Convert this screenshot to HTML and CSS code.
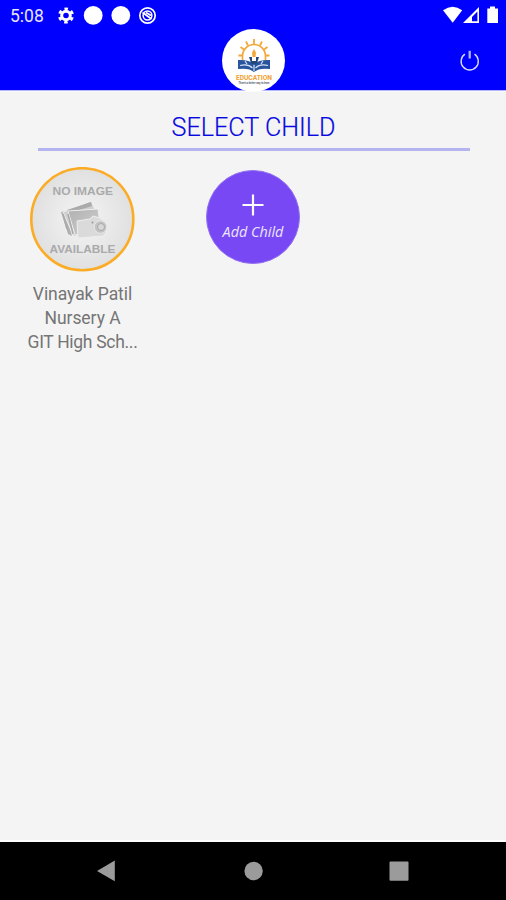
FILE: index.html
```
<!DOCTYPE html>
<html lang="en">
<head>
<meta charset="utf-8">
<title>Select Child</title>
<link rel="stylesheet" href="styles.css">
</head>
<body>
<div class="screen">
  <header class="header">
    <div class="status">
      <span class="clock">5:08</span>
      <svg class="status-left" viewBox="56 0 104 29" width="104" height="29">
        <g fill="none" stroke="#fff">
          <circle cx="66" cy="15.5" r="4.3" stroke-width="3"/>
          <circle cx="66" cy="15.5" r="6.7" stroke-width="2.6" stroke-dasharray="3.5 3.516" stroke-dashoffset="-1.75"/>
          <circle cx="147.5" cy="15.5" r="7.7" stroke-width="1.7"/>
          <circle cx="147.5" cy="15.5" r="4.4" stroke-width="1.5"/>
          <path d="M142.5 12.5L151.5 19M146 12.5L151 15.5" stroke-width="1.7"/>
        </g>
        <circle cx="93.2" cy="15.4" r="9.4" fill="#fff"/>
        <circle cx="120.8" cy="15.4" r="9.4" fill="#fff"/>
      </svg>
      <svg class="status-right" viewBox="440 0 66 29" width="66" height="29">
        <path fill="#fff" d="M443 10.2Q452.7 3.2 462.2 10.2L452.7 22.8Z"/>
        <path fill="#fff" fill-rule="evenodd" d="M479 7V23H463ZM477.4 11.500L472 17V21.300H477.400Z"/>
        <path fill="#fff" d="M490 6.6H495V8.4H498V23H487.3V8.4H490Z"/>
      </svg>
    </div>
    <div class="appbar">
      <div class="logo">
        <svg viewBox="222 29 63 63" width="63" height="63">
          <g fill="none" stroke="#f3a83b">
            <path d="M242.5 60.5V56A11.5 11.5 0 0 1 265.5 56V60.5" stroke-width="1.7"/>
            <path d="M254 39V44M246 41.5L248 45.5M262 41.5L260 45.5M240.5 47L244 49.500M267.5 47L264 49.500M238.5 55.5H242M266 55.5H269.5" stroke-width="1.8"/>
          </g>
          <path fill="#f3a83b" d="M254 49L256 52.5L255.5 57H252.5L252 52.5Z"/>
          <path fill="#28559d" d="M238 60Q249 59.5 254 64Q259 59.5 270 60V69Q259 67.500 254 72Q249 67.500 238 69Z"/>
          <path fill="none" stroke="#d7e3f5" stroke-width="1.2" d="M254 64V71M240 65.5Q248 63.5 252.5 68M268 65.5Q260 63.5 255.5 68M245 61L247 64M263 61L261 64"/>
          <path fill="#244579" d="M249 57H252V61H256V57H259L257 63L254 65L251 63Z"/>
          <text class="logo-name" x="236" y="80.2" textLength="36" lengthAdjust="spacingAndGlyphs">EDUCATION</text>
          <text class="logo-tag" x="238.5" y="83.8" textLength="31" lengthAdjust="spacingAndGlyphs">There's a better way to learn</text>
        </svg>
      </div>
      <svg class="power" viewBox="456 48 28 28" width="28" height="28">
        <path d="M464.9 54.2A8.6 8.6 0 1 0 474.5 54.2" fill="none" stroke="#d8d8ff" stroke-width="1.4"/>
        <path d="M469.7 50.8V58.5" stroke="#b4b4ff" stroke-width="2.3"/>
      </svg>
    </div>
  </header>
  <main class="content">
    <h1 class="title"><svg width="166" height="34"><text x="0.5" y="26" textLength="164" lengthAdjust="spacingAndGlyphs">SELECT CHILD</text></svg></h1>
    <div class="children">
      <div class="child">
        <svg class="avatar" viewBox="30 167 105 105" width="105" height="105">
          <defs>
            <radialGradient id="shade"><stop offset="0" stop-color="#f5f5f5"/><stop offset="1" stop-color="#e0e0e0"/></radialGradient>
            <linearGradient id="photo" x1="0" y1="0" x2="1" y2="1"><stop offset="0" stop-color="#b0b0b0"/><stop offset="1" stop-color="#d2d2d2"/></linearGradient>
          </defs>
          <circle cx="82.3" cy="219.2" r="51" fill="url(#shade)" stroke="#fbac24" stroke-width="2.6"/>
          <text x="52.5" y="194.8" textLength="60.5" lengthAdjust="spacingAndGlyphs">NO IMAGE</text>
          <path d="M61 212L68 234L72 236L65 211Z" fill="#b0b0b0"/>
          <path d="M63 212L91 201L101 222L74 237Z" fill="#d0d0d0" stroke="#f0f0f0"/>
          <path d="M67 210L91 202L92 206L70 213Z" fill="#ababab"/>
          <path d="M68 211L98 209L101 231L75 235Z" fill="url(#photo)" stroke="#eee"/>
          <path d="M63 214L67 229M68 214L73 234" stroke="#aaa" stroke-width="1.5"/>
          <path d="M77 221L90 219L93 216L100 218L106 222V233L103 236L78 238Z" fill="#dadada" stroke="#eee"/>
          <circle cx="100.5" cy="227" r="6.3" fill="#c3c3c3" stroke="#e8e8e8"/>
          <circle cx="101" cy="227" r="3.5" fill="#d8d8d8" stroke="#a9a9a9"/>
          <circle cx="92.5" cy="222.5" r="1" fill="#999"/>
          <text x="49.5" y="252.5" textLength="66" lengthAdjust="spacingAndGlyphs">AVAILABLE</text>
        </svg>
        <div class="details">
          <div>Vinayak Patil</div>
          <div>Nursery A</div>
          <div class="school">GIT High Sch...</div>
        </div>
      </div>
      <div class="add">
        <svg width="22" height="22" viewBox="0 0 22 22"><path d="M11 .5V21.5M.5 11H21.5" stroke="#fff" stroke-width="2.2"/></svg>
        <span>Add Child</span>
      </div>
    </div>
  </main>
  <nav class="nav">
    <svg viewBox="0 842 506 58" width="506" height="58" fill="#9b9b9b">
      <path d="M114.8 860.5V881.3L97 871Z"/>
      <circle cx="253.6" cy="871" r="9.2"/>
      <rect x="389.5" y="861.5" width="19" height="19.3" rx="1"/>
    </svg>
  </nav>
</div>
</body>
</html>
```
FILE: styles.css
```
* { box-sizing: border-box; }
body {
  margin: 0;
  background: #f4f4f4;
  font-family: Roboto, sans-serif;
}
svg { display: block; }
.screen {
  display: flex;
  flex-direction: column;
  width: 506px;
  height: 900px;
}
.header {
  height: 91px;
  background: #0000ff;
  border-bottom: 1px solid #b4b4ff;
}
.status {
  display: flex;
  height: 29px;
}
.clock {
  width: 46px;
  margin-right: 10px;
  padding-left: 10px;
  color: #e6e6ff;
  font-size: 17.5px;
  line-height: 32px;
  white-space: nowrap;
}
.status-right { margin-left: auto; }
.appbar {
  display: grid;
  grid-template-columns: 222px 63px 1fr;
  height: 62px;
}
.logo {
  grid-column: 2;
  width: 63px;
  height: 63px;
  border-radius: 50%;
  background: #fff;
}
.logo-name {
  fill: #f0a030;
  font-size: 7.5px;
  font-weight: 700;
}
.logo-tag {
  fill: #555b70;
  font-size: 3px;
  font-weight: 700;
}
.power {
  justify-self: end;
  margin: 19px 22px 0 0;
}
.content {
  flex: 1;
  border-top: 1px solid #fafafa;
  border-bottom: 2px solid #fff;
}
.title {
  display: flex;
  justify-content: center;
  width: 432px;
  height: 59px;
  margin: 0 0 0 38px;
  padding-top: 18px;
  border-bottom: 3px solid #b4b4f0;
}
.title text {
  fill: #0808e0;
  font-size: 25px;
  font-weight: 300;
  stroke: #0808e0;
  stroke-width: 0.2px;
}
.children {
  display: grid;
  grid-template-columns: 168px 168px 1fr;
  padding-top: 16px;
}
.child {
  display: flex;
  flex-direction: column;
  align-items: center;
  padding-right: 3px;
}
.avatar text {
  fill: #aaa;
  font-family: "Liberation Sans", sans-serif;
  font-size: 11.5px;
  font-weight: 700;
}
.details {
  margin-top: 10px;
  color: #757575;
  font-size: 17.5px;
  letter-spacing: -0.05px;
  line-height: 24px;
  text-align: center;
  white-space: nowrap;
}
.school { letter-spacing: -0.3px; }
.add {
  display: flex;
  flex-direction: column;
  align-items: center;
  width: 94px;
  height: 94px;
  margin: 3px 0 0 38px;
  padding-top: 23px;
  border: 1px solid #9474f0;
  border-radius: 50%;
  background: #7748f3;
  color: #eee6ff;
  font-family: "Open Sans", sans-serif;
  font-size: 14.4px;
  font-style: italic;
  line-height: 20px;
}
.add span { margin-top: 6px; white-space: nowrap; }
.nav {
  height: 58px;
  background: #000;
}
```
